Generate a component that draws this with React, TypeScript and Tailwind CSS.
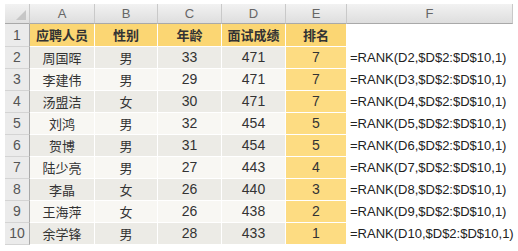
const cols = ['A', 'B', 'C', 'D', 'E', 'F']

const rows = [
  ['周国晖', '男', '33', '471', '7'],
  ['李建伟', '男', '29', '471', '7'],
  ['汤盟洁', '女', '30', '471', '7'],
  ['刘鸿', '男', '32', '454', '5'],
  ['贺博', '男', '31', '454', '5'],
  ['陆少亮', '男', '27', '443', '4'],
  ['李晶', '女', '26', '440', '3'],
  ['王海萍', '女', '26', '438', '2'],
  ['余学锋', '男', '28', '433', '1'],
]

const widths = ['w-[65px]', 'w-[63px]', 'w-[64px]', 'w-[64px]', 'w-[61px]', 'w-[166px]']

const cn = { fontFamily: '"Noto Sans CJK SC", "Liberation Sans", sans-serif' }
const latin = { fontFamily: '"Liberation Sans", Arial, sans-serif' }

function RowNum({ n, h }: { n: number; h: string }) {
  return (
    <div
      className={`w-[25px] ${h} shrink-0 flex items-center justify-center bg-[#ebebeb] border-r border-r-[#a9a9a9] border-b border-b-[#d4d4d4] text-[14px] text-[#555]`}
      style={latin}
    >
      {n}
    </div>
  )
}

export default function App() {
  return (
    <div className="w-[518px] h-[251px] bg-white pt-[4px] pl-[5px] overflow-hidden">
      {/* column letters */}
      <div className="flex h-[20px]">
        <div className="relative w-[25px] shrink-0 bg-gradient-to-b from-[#f2f2f2] to-[#e0e0e0] border-r border-r-[#c9c9c9] border-b border-b-[#a9a9a9]">
          <div className="absolute right-[3px] bottom-[3px] w-0 h-0 border-l-[10px] border-l-transparent border-b-[10px] border-b-[#c6c6c6]" />
        </div>
        {cols.map((c, i) => (
          <div
            key={c}
            className={`${widths[i]} shrink-0 flex items-center justify-center bg-gradient-to-b from-[#f2f2f2] to-[#dedede] border-r border-r-[#c9c9c9] border-b border-b-[#a9a9a9] text-[13px] text-[#666]`}
            style={latin}
          >
            {c}
          </div>
        ))}
      </div>

      {/* row 1 headers */}
      <div className="flex h-[23px]">
        <RowNum n={1} h="h-[23px]" />
        {['应聘人员', '性别', '年龄', '面试成绩', '排名'].map((t, i) => (
          <div
            key={t}
            className={`${widths[i]} shrink-0 flex items-center justify-center bg-[#fbd673] border-r border-b border-white text-[13px] font-bold text-[#333]`}
            style={cn}
          >
            {t}
          </div>
        ))}
        <div className={`${widths[5]} shrink-0 bg-white`} />
      </div>

      {rows.map((r, ri) => {
        const bg = ri % 2 === 0 ? 'bg-[#ecebe6]' : 'bg-[#f8f7f3]'
        return (
          <div key={ri} className="flex h-[22px]">
            <RowNum n={ri + 2} h="h-[22px]" />
            {r.map((v, i) => (
              <div
                key={i}
                className={`${widths[i]} shrink-0 flex items-center justify-center ${i === 4 ? 'bg-[#fddc82]' : bg} border-r border-b border-white text-[#333] ${i < 2 ? 'text-[13px]' : 'text-[14px]'}`}
                style={i < 2 ? cn : latin}
              >
                {v}
              </div>
            ))}
            <div
              className={`${widths[5]} shrink-0 flex items-center pl-[3px] bg-white text-[13px] text-[#222] whitespace-nowrap`}
              style={latin}
            >
              =RANK(D{ri + 2},$D$2:$D$10,1)
            </div>
          </div>
        )
      })}
    </div>
  )
}
